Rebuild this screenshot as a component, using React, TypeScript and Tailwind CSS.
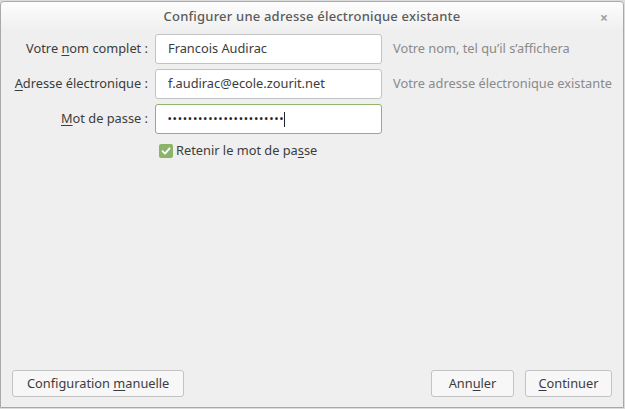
import React from "react";

const font = { fontFamily: '"Noto Sans", "DejaVu Sans", sans-serif' };

function U({ children }: { children: React.ReactNode }) {
  return <span className="underline underline-offset-2 decoration-1">{children}</span>;
}

function Field({ value, focused, pw }: { value: string; focused?: boolean; pw?: boolean }) {
  return (
    <div
      className={`w-[227px] h-[30px] rounded-[3px] bg-white border flex items-center pl-[12px] text-[12.8px] text-[#3c3c3c] ${
        focused ? "border-[#8fb56a]" : "border-[#c3c3c3]"
      }`}
    >
      {pw ? (
        <span className="flex items-center">
          <span className="text-[9px] tracking-[1.7px] font-bold text-[#222]">{value}</span>
          <span className="w-px h-[15px] bg-[#222] -ml-[1px]" />
        </span>
      ) : (
        value
      )}
    </div>
  );
}

export default function App() {
  return (
    <div className="w-[625px] h-[409px] bg-[#dcdcdc] relative overflow-hidden" style={font}>
      <div className="absolute left-0 top-[1px] w-[624px] h-[407px] bg-[#efefef] border border-[#a9a9a9] rounded-t-[4px] flex flex-col">
        <div className="h-[29px] shrink-0 bg-gradient-to-b from-[#fdfdfd] to-[#efefef] flex items-center justify-center relative rounded-t-[4px]">
          <span className="text-[13px] font-medium text-[#5b5b5b] tracking-[0.2px]">Configurer une adresse électronique existante</span>
          <span className="absolute right-[15px] top-[5px] text-[14px] font-bold text-[#a0a0a0]">×</span>
        </div>
        <div className="flex flex-col gap-[5px] pt-[3px]">
          <div className="flex items-center">
            <div className="w-[154px] pr-[7px] text-right text-[12.8px] text-[#3c3c3c]">
              Votre <U>n</U>om complet :
            </div>
            <Field value="Francois Audirac" />
            <div className="ml-[11px] text-[12.8px] text-[#8a8a8a]">Votre nom, tel qu’il s’affichera</div>
          </div>
          <div className="flex items-center">
            <div className="w-[154px] pr-[7px] text-right text-[12.8px] text-[#3c3c3c]">
              <U>A</U>dresse électronique :
            </div>
            <Field value="f.audirac@ecole.zourit.net" />
            <div className="ml-[11px] text-[12.8px] text-[#8a8a8a]">Votre adresse électronique existante</div>
          </div>
          <div className="flex items-center">
            <div className="w-[154px] pr-[7px] text-right text-[12.8px] text-[#3c3c3c]">
              <U>M</U>ot de passe :
            </div>
            <Field value="•••••••••••••••••••••••" focused pw />
          </div>
          <div className="flex items-center pl-[158px] pt-[2px]">
            <div className="w-[14px] h-[14px] rounded-[2px] bg-[#8bb46a] flex items-center justify-center">
              <svg width="10" height="10" viewBox="0 0 10 10">
                <path d="M1.5 5.2 L4 7.6 L8.6 2.4" stroke="white" strokeWidth="1.8" fill="none" strokeLinecap="round" strokeLinejoin="round" />
              </svg>
            </div>
            <span className="ml-[3px] text-[12.8px] text-[#3c3c3c]">
              Retenir le mot de pa<U>s</U>se
            </span>
          </div>
        </div>
        <div className="flex-1" />
        <div className="flex items-center px-[11px] pb-[10px]">
          <button className="h-[27px] px-[14px] rounded-[3px] border border-[#c3c3c3] bg-[#f7f7f7] text-[12.8px] text-[#3c3c3c]">
            Configuration <U>m</U>anuelle
          </button>
          <div className="flex-1" />
          <button className="h-[27px] w-[83px] rounded-[3px] border border-[#c3c3c3] bg-[#f7f7f7] text-[12.8px] text-[#3c3c3c]">
            Ann<U>u</U>ler
          </button>
          <button className="ml-[11px] h-[27px] w-[87px] rounded-[3px] border border-[#c3c3c3] bg-[#f7f7f7] text-[12.8px] text-[#3c3c3c]">
            <U>C</U>ontinuer
          </button>
        </div>
      </div>
    </div>
  );
}
